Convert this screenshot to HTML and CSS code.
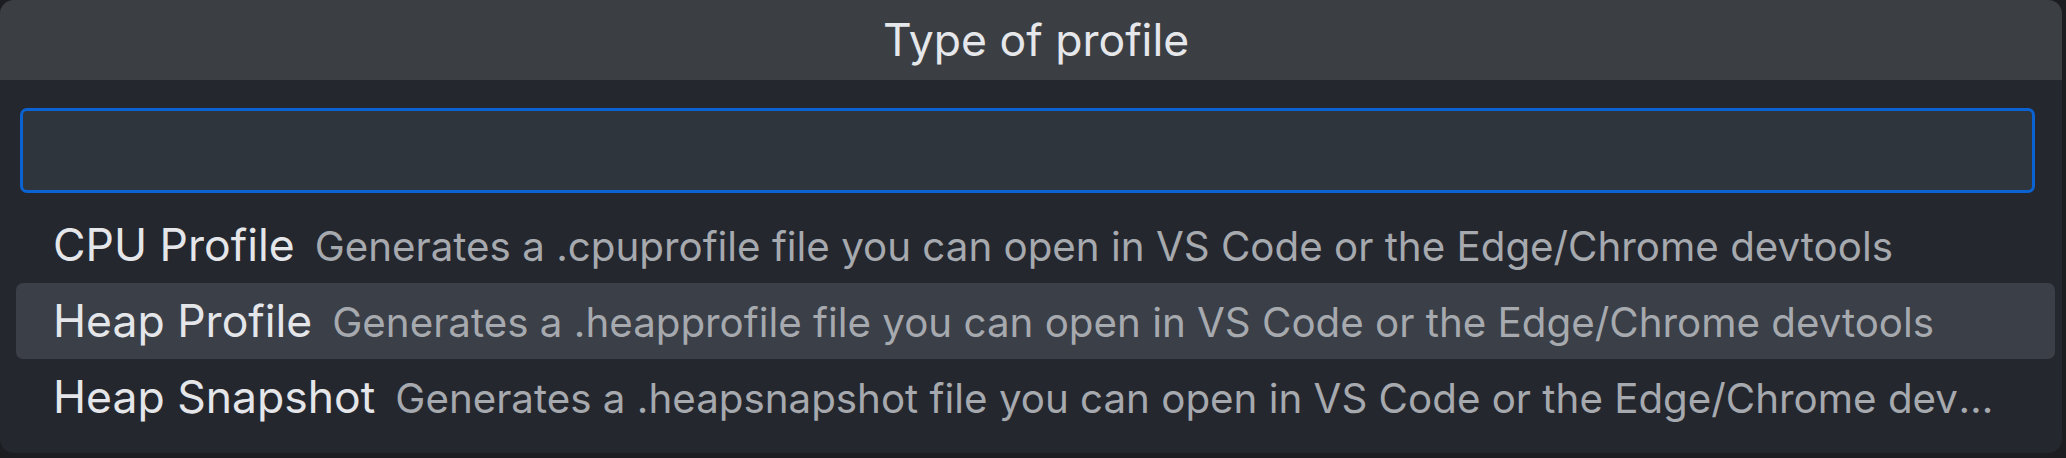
FILE: index.html
```html
<!DOCTYPE html>
<html>
<head>
<meta charset="utf-8">
<link rel="stylesheet" href="styles.css">
</head>
<body>
<div class="panel">
  <div class="titlebar">Type of profile</div>
  <div class="input-wrap"><div class="input"></div></div>
  <div class="list">
    <div class="row">
      <div class="content"><span class="label">CPU Profile</span><span class="desc">Generates a .cpuprofile file you can open in VS Code or the Edge/Chrome devtools</span></div>
    </div>
    <div class="row active">
      <div class="content"><span class="label">Heap Profile</span><span class="desc">Generates a .heapprofile file you can open in VS Code or the Edge/Chrome devtools</span></div>
    </div>
    <div class="row">
      <div class="content"><span class="label">Heap Snapshot</span><span class="desc">Generates a .heapsnapshot file you can open in VS Code or the Edge/Chrome devtools</span></div>
    </div>
  </div>
</div>
</body>
</html>
```
FILE: styles.css
```css
html, body {
  margin: 0;
  padding: 0;
}
body {
  width: 2066px;
  height: 458px;
  overflow: hidden;
  background: #1c1d21;
  font-family: Inter, "Noto Sans", sans-serif;
}
.panel {
  width: 2062px;
  height: 453px;
  background: #24272e;
  border-radius: 14px;
  overflow: hidden;
  display: flex;
  flex-direction: column;
}
.titlebar {
  height: 80px;
  flex: none;
  box-sizing: border-box;
  padding-left: 10px;
  background: #3b3f44;
  color: #e6e7ea;
  font-size: 44.5px;
  display: flex;
  align-items: center;
  justify-content: center;
}
.input-wrap {
  padding: 28px 27px 0 20px;
}
.input {
  height: 85px;
  box-sizing: border-box;
  border: 3px solid #0b62d2;
  border-radius: 7px;
  background: #2f353c;
}
.list {
  margin-top: 14px;
  padding: 0 7px 0 16px;
}
.row {
  height: 76px;
  box-sizing: border-box;
  padding: 0 58px 0 37px;
  border-radius: 7px;
  display: flex;
  align-items: center;
}
.row.active {
  background: #3a3f48;
}
.content {
  display: flex;
  align-items: baseline;
  min-width: 0;
  white-space: nowrap;
}
.label {
  flex: none;
  font-size: 44.5px;
  color: #e4e6ea;
}
.desc {
  font-size: 40.3px;
  color: #a6a9ae;
  margin-left: 20px;
  min-width: 0;
  overflow: hidden;
  text-overflow: ellipsis;
}
```
